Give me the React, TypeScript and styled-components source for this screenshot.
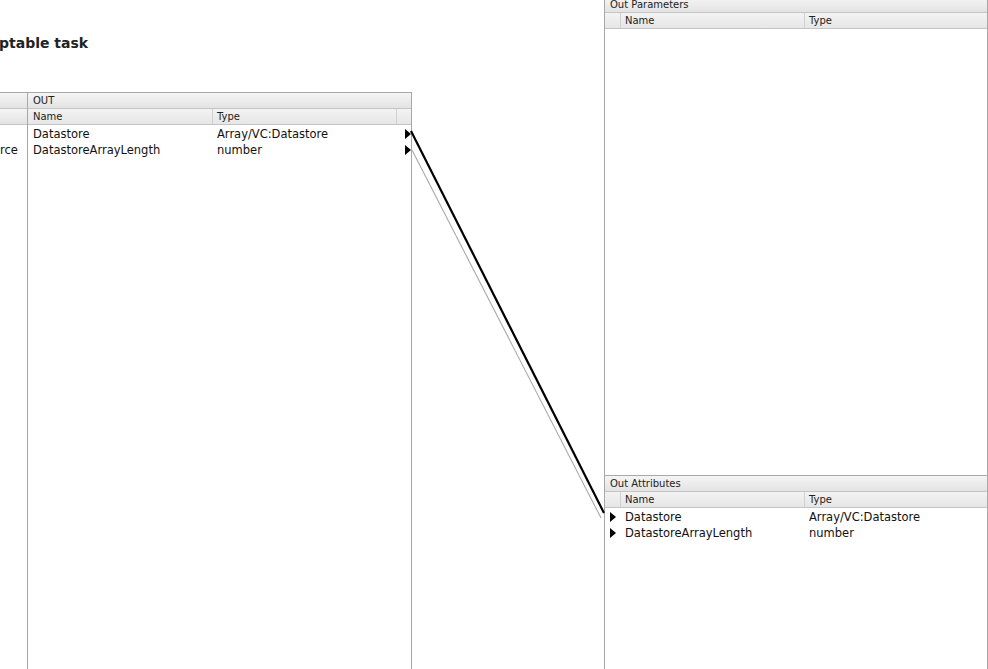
import styled, { createGlobalStyle } from 'styled-components'

const GlobalStyle = createGlobalStyle`
  html, body {
    margin: 0;
    padding: 0;
    background: #ffffff;
    overflow: hidden;
  }
  body {
    font-family: "DejaVu Sans", "Liberation Sans", sans-serif;
    color: #111;
  }
`

type Attr = { name: string; type: string }

const outRows: Attr[] = [
  { name: 'Datastore', type: 'Array/VC:Datastore' },
  { name: 'DatastoreArrayLength', type: 'number' },
]

function App(): JSX.Element {
  return (
    <>
      <GlobalStyle />
      <Page>
        <LeftArea>
          <TitleBar>
            <Title>ptable task</Title>
          </TitleBar>
          <MappingPanel>
            <Stub>
              <HeadRow />
              <HeadRow />
              <StubRow />
              <StubRow>rce</StubRow>
            </Stub>
            <OutTable>
              <HeadRow>OUT</HeadRow>
              <ColumnRow cols="184px 184px 1fr">
                <HeadCell first>Name</HeadCell>
                <HeadCell>Type</HeadCell>
                <HeadCell />
              </ColumnRow>
              {outRows.map((r) => (
                <DataRow key={r.name} cols="184px 184px 1fr">
                  <Cell>{r.name}</Cell>
                  <Cell>{r.type}</Cell>
                  <PinCell align="end">
                    <Pin />
                  </PinCell>
                </DataRow>
              ))}
            </OutTable>
          </MappingPanel>
        </LeftArea>
        <Gutter />
        <RightArea>
          <ParamsPanel>
            <HeadRow>Out Parameters</HeadRow>
            <ColumnRow cols="15px 184px 1fr">
              <HeadCell />
              <HeadCell>Name</HeadCell>
              <HeadCell>Type</HeadCell>
            </ColumnRow>
          </ParamsPanel>
          <AttrsPanel>
            <HeadRow>Out Attributes</HeadRow>
            <ColumnRow cols="15px 184px 1fr">
              <HeadCell />
              <HeadCell>Name</HeadCell>
              <HeadCell>Type</HeadCell>
            </ColumnRow>
            {outRows.map((r) => (
              <DataRow key={r.name} cols="15px 184px 1fr">
                <PinCell align="start">
                  <Pin />
                </PinCell>
                <Cell>{r.name}</Cell>
                <Cell>{r.type}</Cell>
              </DataRow>
            ))}
          </AttrsPanel>
        </RightArea>
        <Links viewBox="0 0 988 669" width="988" height="669">
          <line x1="412" y1="150" x2="601" y2="518" stroke="#a9a9a9" strokeWidth="1.1" />
          <line x1="411" y1="131" x2="604" y2="513" stroke="#000" strokeWidth="2.2" />
        </Links>
      </Page>
    </>
  )
}
export default App

const Page = styled.div`
  position: relative;
  width: 988px;
  height: 669px;
  display: flex;
  overflow: hidden;
`

const LeftArea = styled.div`
  width: 412px;
  display: flex;
  flex-direction: column;
`

const TitleBar = styled.div`
  height: 92px;
  padding-top: 34px;
  box-sizing: border-box;
`

const Title = styled.div`
  font-family: "DejaVu Sans", "Liberation Sans", sans-serif;
  font-weight: bold;
  font-size: 14px;
  line-height: 18px;
  color: #222;
  margin-left: -1px;
`

const MappingPanel = styled.div`
  flex: 1;
  display: flex;
  border-top: 1px solid #a8a8a8;
`

const Stub = styled.div`
  width: 27px;
  border-right: 1px solid #a8a8a8;
  display: flex;
  flex-direction: column;
`

const OutTable = styled.div`
  flex: 1;
  border-right: 1px solid #a8a8a8;
  display: flex;
  flex-direction: column;
`

const HeadRow = styled.div`
  height: 15px;
  line-height: 15px;
  font-size: 10px;
  color: #222;
  padding-left: 5px;
  background: linear-gradient(#f5f5f5, #e3e3e3);
  border-bottom: 1px solid #c4c4c4;
  white-space: nowrap;
`

const ColumnRow = styled.div<{ cols: string }>`
  display: grid;
  grid-template-columns: ${(p) => p.cols};
  height: 15px;
  background: linear-gradient(#f3f3f3, #e6e6e6);
  border-bottom: 1px solid #c4c4c4;
`

const HeadCell = styled.div<{ first?: boolean }>`
  font-size: 10px;
  line-height: 15px;
  color: #222;
  padding-left: ${(p) => (p.first ? '5px' : '4px')};
  border-left: ${(p) => (p.first ? 'none' : '1px solid #d0d0d0')};
  white-space: nowrap;
  &:first-child {
    border-left: none;
  }
`

const DataRow = styled.div<{ cols: string }>`
  display: grid;
  grid-template-columns: ${(p) => p.cols};
  height: 16px;
  align-items: center;
`

const Cell = styled.div`
  font-size: 11.5px;
  line-height: 14px;
  padding-top: 2px;
  color: #111;
  padding-left: 5px;
  white-space: nowrap;
`

const PinCell = styled.div<{ align: 'start' | 'end' }>`
  display: flex;
  justify-content: ${(p) => (p.align === 'end' ? 'flex-end' : 'flex-start')};
  padding-left: ${(p) => (p.align === 'start' ? '5px' : '0')};
  padding-top: 1px;
  box-sizing: border-box;
  align-items: center;
  height: 16px;
`

const Pin = styled.span`
  width: 0;
  height: 0;
  border-top: 5px solid transparent;
  border-bottom: 5px solid transparent;
  border-left: 6px solid #000;
`

const StubRow = styled.div`
  height: 16px;
  line-height: 14px;
  padding-top: 2px;
  box-sizing: border-box;
  font-size: 11.5px;
  text-align: right;
  padding-right: 13px;
  overflow: hidden;
  white-space: nowrap;
`

const Gutter = styled.div`
  width: 192px;
`

const RightArea = styled.div`
  width: 384px;
  display: flex;
  flex-direction: column;
  margin-top: -3px;
`

const ParamsPanel = styled.div`
  height: 478px;
  border-left: 1px solid #a8a8a8;
  border-right: 1px solid #a8a8a8;
  display: flex;
  flex-direction: column;
`

const AttrsPanel = styled.div`
  flex: 1;
  border-left: 1px solid #a8a8a8;
  border-right: 1px solid #a8a8a8;
  border-top: 1px solid #a8a8a8;
  display: flex;
  flex-direction: column;
`

const Links = styled.svg`
  position: absolute;
  left: 0;
  top: 0;
  pointer-events: none;
`
